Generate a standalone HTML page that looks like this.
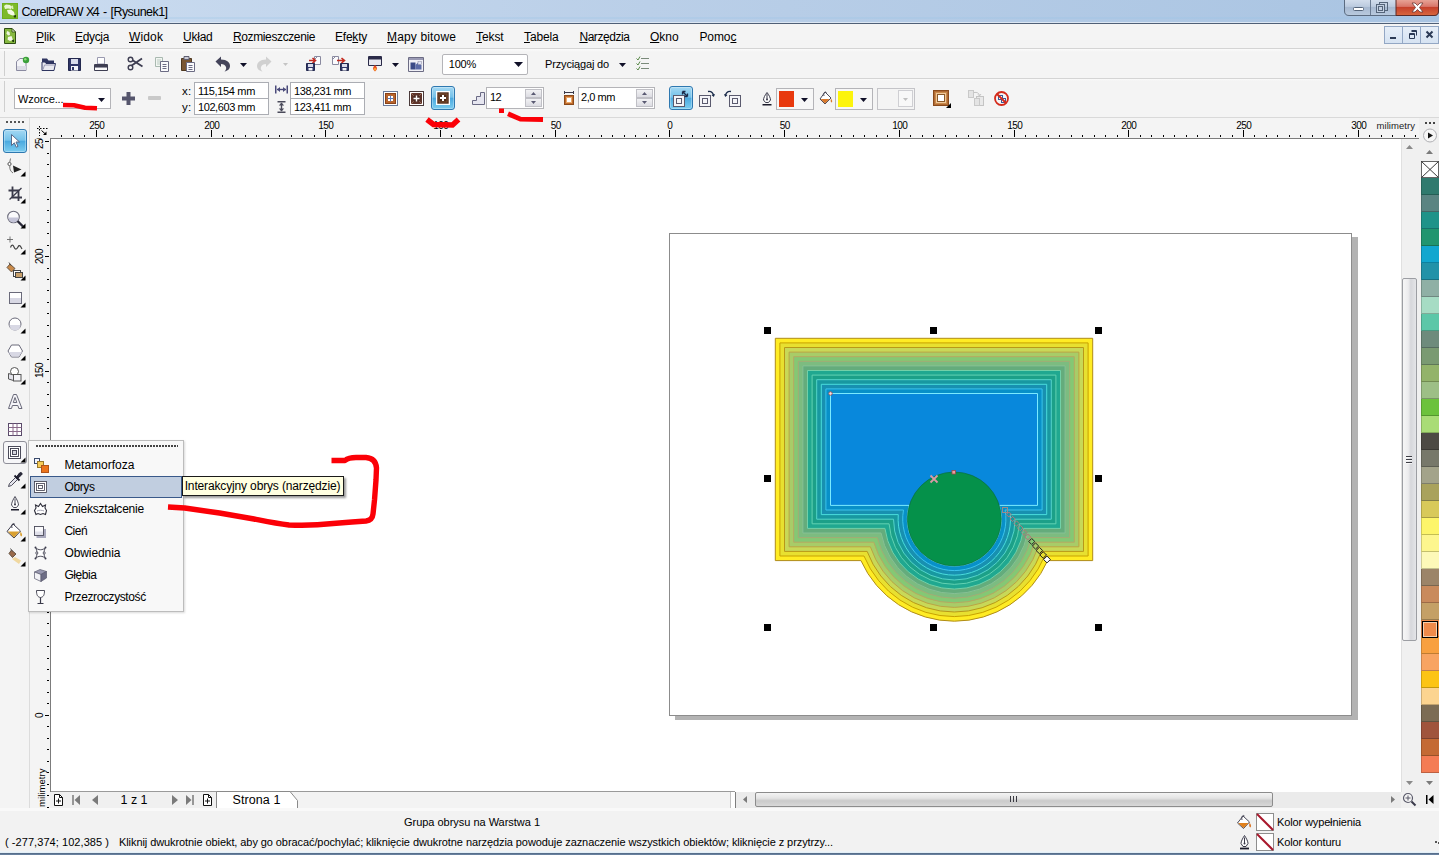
<!DOCTYPE html>
<html lang="pl"><head><meta charset="utf-8"><title>CorelDRAW X4 - [Rysunek1]</title>
<style>
*{box-sizing:border-box;margin:0;padding:0}
html,body{width:1439px;height:855px;overflow:hidden;background:#f0f0f0}
body{font-family:"Liberation Sans",sans-serif;font-size:11px;color:#000;position:relative}
div,span.t,svg{position:absolute}
.t{white-space:pre;line-height:16px;height:16px}
u{text-decoration:underline;text-underline-offset:1px}
.wbox{background:#fff;border:1px solid #abadb3}
</style></head>
<body>
<div style="left:0;top:0;width:1439px;height:23px;background:linear-gradient(90deg,#cbdcf0 0,#bacfe8 45%,#a9c4e2 100%)"></div>
<div style="left:0;top:17px;width:1439px;height:2px;background:rgba(150,195,230,.25)"></div>
<div style="left:0;top:22px;width:1439px;height:1px;background:#dbe6f3"></div>
<div style="left:0;top:23px;width:1439px;height:1px;background:#4f5f76"></div>
<svg style="left:2px;top:3px" width="16" height="16" viewBox="0 0 16 16"><rect x="0" y="0" width="16" height="16" fill="#6fae1c"/><rect x="1" y="1" width="14" height="14" fill="#7dba2a"/><path d="M2 3L4 1.5L8 2L10 4L9 6L6 5.5L3 6Z" fill="#eaf5d4"/><path d="M5 7L9 6.5L12 9L13 13L9 12L6 10.5Z" fill="#f4fae6"/><path d="M9 3L11 2.5L11.5 6L10 6Z" fill="#dcefb8"/><path d="M11.5 12.5L14 12L14 14.5L12 14.5Z" fill="#1f3d0c"/></svg>
<span class="t " style="left:21.5px;top:3.9px;font-size:12.5px;letter-spacing:-0.678px;">CorelDRAW</span>
<span class="t " style="left:86.0px;top:3.9px;font-size:12.5px;letter-spacing:-1.645px;">X4</span>
<span class="t " style="left:103.0px;top:3.9px;font-size:12.5px;">-</span>
<span class="t " style="left:110.5px;top:3.9px;font-size:12.5px;letter-spacing:-0.553px;">[Rysunek1]</span>
<svg style="left:1344px;top:0" width="95" height="17" viewBox="0 0 95 17">
<defs><linearGradient id="wb" x1="0" y1="0" x2="0" y2="1"><stop offset="0" stop-color="#d5e0ee"/><stop offset=".45" stop-color="#bccbdf"/><stop offset=".5" stop-color="#a7b9d1"/><stop offset="1" stop-color="#b9cade"/></linearGradient>
<linearGradient id="wc" x1="0" y1="0" x2="0" y2="1"><stop offset="0" stop-color="#e9a99c"/><stop offset=".45" stop-color="#d9776a"/><stop offset=".5" stop-color="#c5402b"/><stop offset="1" stop-color="#d9683f"/></linearGradient></defs>
<path d="M0.5 -1 V11 Q0.5 15.5 5 15.5 H90 Q94.5 15.5 94.5 11 V-1Z" fill="url(#wb)" stroke="#5b6b80"/>
<path d="M52 -1 V15.5 H90 Q94.5 15.5 94.5 11 V-1Z" fill="url(#wc)" stroke="#5b2b28"/>
<path d="M26.5 0V15" stroke="#6b7c93"/>
<rect x="9.5" y="7.5" width="10" height="3" rx="1" fill="#fff" stroke="#55657a"/>
<rect x="35.5" y="2.5" width="8" height="8" fill="none" stroke="#55657a"/><rect x="32.5" y="4.5" width="8" height="8" fill="#c3d0e2" stroke="#55657a"/><rect x="34.5" y="6.5" width="4" height="4" fill="none" stroke="#55657a"/>
<path d="M68 3 L71 3 L73.5 5.5 L76 3 L79 3 L75.5 7.5 L79 12 L76 12 L73.5 9.5 L71 12 L68 12 L71.5 7.5Z" fill="#fff" stroke="#6b3a36" stroke-width=".8"/>
</svg>
<div style="left:0;top:24px;width:1439px;height:24px;background:#f4f4f4"></div>
<div style="left:0;top:48px;width:1439px;height:1px;background:#d4d4d4"></div>
<svg style="left:4px;top:28px" width="13" height="17" viewBox="0 0 13 17"><path d="M.5 .5H8L11.5 4V15.5H.5Z" fill="#86b840" stroke="#2f4f14"/><path d="M8 .5V4H11.5Z" fill="#e3efcf" stroke="#2f4f14" stroke-width=".8"/><path d="M3 3L5.5 4L6 7L4 7.5L2.5 5.5Z" fill="#eef6e0"/><path d="M4 9L7.5 8L9 12L6 13L3.5 11.5Z" fill="#f4faea"/><path d="M8 12L10 11.5L10 14L8.5 14Z" fill="#1f3d0c"/></svg>
<span class="t" style="left:36px;top:28.6px;font-size:12px;letter-spacing:-0.084px"><u>P</u>lik</span>
<span class="t" style="left:75px;top:28.6px;font-size:12px;letter-spacing:-0.336px"><u>E</u>dycja</span>
<span class="t" style="left:129px;top:28.6px;font-size:12px;letter-spacing:0.132px"><u>W</u>idok</span>
<span class="t" style="left:183px;top:28.6px;font-size:12px;letter-spacing:-0.236px"><u>U</u>kład</span>
<span class="t" style="left:233px;top:28.6px;font-size:12px;letter-spacing:-0.383px"><u>R</u>ozmieszczenie</span>
<span class="t" style="left:335px;top:28.6px;font-size:12px;letter-spacing:-0.224px">Efe<u>k</u>ty</span>
<span class="t" style="left:387px;top:28.6px;font-size:12px;letter-spacing:0.149px"><u>M</u>apy bitowe</span>
<span class="t" style="left:476px;top:28.6px;font-size:12px;letter-spacing:-0.081px"><u>T</u>ekst</span>
<span class="t" style="left:524px;top:28.6px;font-size:12px;letter-spacing:-0.126px"><u>T</u>abela</span>
<span class="t" style="left:579.4px;top:28.6px;font-size:12px;letter-spacing:-0.447px"><u>N</u>arzędzia</span>
<span class="t" style="left:650px;top:28.6px;font-size:12px;letter-spacing:-0.020px"><u>O</u>kno</span>
<span class="t" style="left:699.4px;top:28.6px;font-size:12px;letter-spacing:-0.069px">Pomo<u>c</u></span>
<div style="left:1384px;top:26px;width:19px;height:18px;background:linear-gradient(#e6eef8,#d6e3f2);border:1px solid #93a7c4"></div>
<div style="left:1402px;top:26px;width:19px;height:18px;background:linear-gradient(#e6eef8,#d6e3f2);border:1px solid #93a7c4"></div>
<div style="left:1420px;top:26px;width:19px;height:18px;background:linear-gradient(#e6eef8,#d6e3f2);border:1px solid #93a7c4"></div>
<svg style="left:1385px;top:26px" width="54" height="18" viewBox="0 0 54 18"><rect x="5" y="11" width="6" height="2" fill="#2b3a55"/>
<path d="M26.5 4.5 H31.5 V9.5 M24.5 7.5 H29.5 V12.5 H24.5Z M24.5 8.5H29.5 M26.5 5.5H31.5" fill="none" stroke="#2b3a55"/>
<path d="M41.5 5.5 L47.5 11.5 M47.5 5.5 L41.5 11.5" stroke="#2b3a55" stroke-width="2"/></svg>
<div style="left:0;top:49px;width:1439px;height:29px;background:linear-gradient(#fbfbfb 0,#f4f4f4 3px)"></div>
<div style="left:0;top:78px;width:1439px;height:1px;background:#d4d4d4"></div>
<div style="left:0;top:79px;width:1439px;height:38px;background:linear-gradient(#fafafa 0,#f4f4f4 2px)"></div>
<div style="left:0;top:117px;width:1439px;height:1px;background:#d9d9d9"></div>
<div style="left:4px;top:51px;width:1px;height:25px;background:#cfcfcf"></div>
<div style="left:4px;top:81px;width:1px;height:31px;background:#cfcfcf"></div>
<svg style="left:15px;top:56px" width="16" height="16" viewBox="0 0 16 16"><path d="M1.5 5.5 L5 2.5 H11 V14.5 H1.5Z" fill="#f4f4f8" stroke="#8a8aa0"/><path d="M2 10 H11 V14 H2Z" fill="#dcdce6"/><circle cx="11" cy="4" r="3.200" fill="#3aa03a"/><circle cx="10.300" cy="3.300" r="1.200" fill="#8fdc7a"/></svg>
<svg style="left:41px;top:56px" width="16" height="16" viewBox="0 0 16 16"><path d="M1 2.5 H6 L7.5 4.5 H13 V7 H1Z" fill="#2f3560"/><path d="M1 14.5 V6 H4 L5 7.5 H14.5 L13 14.5Z" fill="#e9e9f0" stroke="#2f3560"/><path d="M2 13.5 L3.5 9 H14" fill="none" stroke="#9a9ab4"/></svg>
<svg style="left:68px;top:56px" width="14" height="16" viewBox="0 0 14 16"><path d="M.5 2.5 H12.5 V14.5 H.5Z" fill="#2f3566" stroke="#23284e"/><rect x="3" y="3" width="7" height="5" fill="#d9dbea"/><rect x="3" y="10" width="7" height="4.5" fill="#f4f4f8"/><rect x="4" y="11" width="2" height="3" fill="#2f3566"/></svg>
<svg style="left:93px;top:56px" width="16" height="16" viewBox="0 0 16 16"><path d="M4.5 1.5 H11.5 V8 H4.5Z" fill="#fff" stroke="#9a9ab0"/><path d="M1.5 8.5 H14.5 V14.5 H1.5Z" fill="#ececf2" stroke="#3e3e52"/><rect x="2" y="9" width="12" height="2.5" fill="#3e3e52"/><rect x="2" y="12" width="12" height="2" fill="#fafafa"/></svg>
<svg style="left:127px;top:56px" width="17" height="16" viewBox="0 0 17 16"><path d="M2 2 L15.5 10.5 M2.5 11 L15 2.5" stroke="#3e3e52" stroke-width="1.800" fill="none"/><circle cx="3.5" cy="3.5" r="2.300" fill="#f4f4f4" stroke="#3e3e52" stroke-width="1.400"/><circle cx="3.5" cy="11.5" r="2.300" fill="#f4f4f4" stroke="#3e3e52" stroke-width="1.400"/></svg>
<svg style="left:154px;top:56px" width="16" height="16" viewBox="0 0 16 16"><path d="M1.5 1.5 H8.5 V10.5 H1.5Z" fill="#f2f6f2" stroke="#a9b9b0"/><path d="M3 4H7M3 6H7M3 8H7" stroke="#b9c9c0"/><path d="M6.5 5.5 H14.5 V15.5 H6.5Z" fill="#fbfbfd" stroke="#6c6c84"/><path d="M8.5 8.5H12.5M8.5 10.5H12.5M8.5 12.5H12.5" stroke="#6c6c84"/></svg>
<svg style="left:180px;top:55px" width="16" height="17" viewBox="0 0 16 17"><path d="M1.5 3.5 H11.5 V15.5 H1.5Z" fill="#7a5632" stroke="#4e3820"/><path d="M4 1.5 H9 V4.5 H4Z" fill="#c9c9d4" stroke="#5e5e70"/><path d="M6.5 7.5 H14.5 V16.5 H6.5Z" fill="#fbfbfd" stroke="#6c6c84"/><path d="M8.5 10.5H12.5M8.5 12.5H12.5M8.5 14.5H12.5" stroke="#6c6c84"/></svg>
<svg style="left:215px;top:56px" width="16" height="16" viewBox="0 0 16 16"><g><path d="M0.5 5.5 L6 0.5 V3.5 C12 3.5 15 6.5 15 10 C15 13 12.5 15 9.5 15.5 C11 14 11.5 12.5 11 11 C10.300 9 8.5 8 6 8 V11Z" fill="#44445a"/></g></svg>
<svg style="left:256px;top:56px" width="16" height="16" viewBox="0 0 16 16"><g transform="translate(16,0) scale(-1,1)"><path d="M0.5 5.5 L6 0.5 V3.5 C12 3.5 15 6.5 15 10 C15 13 12.5 15 9.5 15.5 C11 14 11.5 12.5 11 11 C10.300 9 8.5 8 6 8 V11Z" fill="#d0d0d0"/></g></svg>
<svg style="left:239.5px;top:62.5px" width="7" height="4" viewBox="0 0 7 4"><path d="M0 0 H7 L3.5 4Z" fill="#101028"/></svg>
<svg style="left:282.5px;top:63.0px" width="5" height="3" viewBox="0 0 5 3"><path d="M0 0 H5 L2.5 3Z" fill="#c4c4c4"/></svg>
<svg style="left:306px;top:55px" width="17" height="17" viewBox="0 0 17 17"><path d="M8.5 1.5 H14.5 V9.5 H8.5Z" fill="#fbfbfd" stroke="#8a8aa0"/><path d="M8.5 4.5 L11.5 1.5" stroke="#8a8aa0"/><path d="M3 5.5 H9 M6.5 3 L9.5 5.5 L6.5 8" stroke="#c42a1e" stroke-width="1.600" fill="none"/><path d="M.5 8.5 H8.5 V15.5 H.5Z" fill="#2f3566" stroke="#23284e"/><rect x="2" y="9" width="5" height="3" fill="#d9dbea"/><rect x="2.5" y="13" width="4" height="2.5" fill="#f4f4f8"/></svg>
<svg style="left:332px;top:55px" width="17" height="17" viewBox="0 0 17 17"><path d="M.5 1.5 H6.5 V9.5 H.5Z" fill="#fbfbfd" stroke="#8a8aa0"/><path d="M.5 4.5 L3.5 1.5" stroke="#8a8aa0"/><path d="M5 5.5 H12 M9.5 3 L12.5 5.5 L9.5 8" stroke="#c42a1e" stroke-width="1.600" fill="none"/><path d="M8.5 8.5 H16.5 V15.5 H8.5Z" fill="#2f3566" stroke="#23284e"/><rect x="10" y="9" width="5" height="3" fill="#d9dbea"/><rect x="10.5" y="13" width="4" height="2.5" fill="#f4f4f8"/></svg>
<svg style="left:368px;top:56px" width="14" height="16" viewBox="0 0 14 16"><path d="M.5 .5 H13.5 V9.5 H.5Z" fill="#e6e6ee" stroke="#2a2a48"/><rect x="1" y="1" width="12" height="2.5" fill="#2a2a48"/><path d="M7 9 C9 11 10 13 7 15.5 C4 13 5 11 7 9Z" fill="#e8481c"/><path d="M7 11.5 C8 12.5 8.300 13.5 7 15 C5.700 13.5 6 12.5 7 11.5Z" fill="#ffc83a"/></svg>
<svg style="left:391.5px;top:62.5px" width="7" height="4" viewBox="0 0 7 4"><path d="M0 0 H7 L3.5 4Z" fill="#101028"/></svg>
<svg style="left:408px;top:57px" width="16" height="15" viewBox="0 0 16 15"><path d="M.5 .5 H15.5 V14.5 H.5Z" fill="#f0f0f6" stroke="#6c6c84"/><rect x="1" y="1" width="14" height="2" fill="#9a9ab4"/><path d="M2.5 5.5 H7.5 V12.5 H2.5Z" fill="#3a4a86"/><path d="M7.5 8 L10 5.5 L13.5 8 V12.5 H7.5Z" fill="#5a6aa6"/><rect x="10" y="4.5" width="3.5" height="3" fill="#dfe3f4" stroke="#8a8aa0" stroke-width=".5"/></svg>
<div class="wbox" style="left:442px;top:54px;width:86px;height:21px;border-color:#b4b4b8;border-radius:2px"></div>
<span class="t " style="left:448.7px;top:56.4px;font-size:11px;letter-spacing:-0.158px;">100%</span>
<svg style="left:513.5px;top:62.0px" width="9" height="5" viewBox="0 0 9 5"><path d="M0 0 H9 L4.5 5Z" fill="#101028"/></svg>
<span class="t " style="left:545.0px;top:56.4px;font-size:11px;letter-spacing:-0.156px;">Przyciągaj do</span>
<svg style="left:618.5px;top:62.5px" width="7" height="4" viewBox="0 0 7 4"><path d="M0 0 H7 L3.5 4Z" fill="#101028"/></svg>
<svg style="left:636px;top:56px" width="14" height="15" viewBox="0 0 14 15"><path d="M5 2.5H13M5 7.5H13M5 12.5H13" stroke="#7a8a7a" stroke-width="1.200"/><path d="M.5 2.5 L2 4 L4 .5 M.5 7.5 L2 9 L4 5.5 M.5 12.5 L2 14 L4 10.5" stroke="#5a8a4a" fill="none"/></svg>
<div class="wbox" style="left:14px;top:88px;width:97px;height:21px;border-color:#b4b4b8"></div>
<span class="t " style="left:18.0px;top:91.4px;font-size:11px;letter-spacing:-0.105px;">Wzorce...</span>
<svg style="left:97.5px;top:97.5px" width="7" height="4" viewBox="0 0 7 4"><path d="M0 0 H7 L3.5 4Z" fill="#101028"/></svg>
<svg style="left:122px;top:92px" width="13" height="13" viewBox="0 0 13 13"><path d="M4.5 0 H8.5 V4.5 H13 V8.5 H8.5 V13 H4.5 V8.5 H0 V4.5 H4.5Z" fill="#55556c"/></svg>
<div style="left:148px;top:96px;width:13px;height:4px;background:#c9c9c9;border-radius:1px"></div>
<span class="t " style="left:182.0px;top:83.2px;font-size:11.5px;letter-spacing:0.278px;">x:</span>
<span class="t " style="left:182.0px;top:99.2px;font-size:11.5px;letter-spacing:0.278px;">y:</span>
<div class="wbox" style="left:194px;top:82px;width:75px;height:17px"></div>
<div class="wbox" style="left:194px;top:98px;width:75px;height:17px"></div>
<span class="t " style="left:198.0px;top:83.4px;font-size:11px;letter-spacing:-0.332px;">115,154 mm</span>
<span class="t " style="left:198.0px;top:99.4px;font-size:11px;letter-spacing:-0.414px;">102,603 mm</span>
<svg style="left:275px;top:85px" width="13" height="9" viewBox="0 0 13 9"><path d="M.75 .5V8.5M12.250 .5V8.5" stroke="#4a4a7a" stroke-width="1.5"/><path d="M2 4.5H11" stroke="#4a4a7a" stroke-width="1.400"/><path d="M2 4.5L5 2V7ZM11 4.5L8 2V7Z" fill="#4a4a7a"/></svg>
<svg style="left:277px;top:101px" width="9" height="12" viewBox="0 0 9 12"><path d="M.5 .75H8.5M.5 11.250H8.5" stroke="#4a4a5a" stroke-width="1.5"/><path d="M4.5 2V10" stroke="#4a4a5a" stroke-width="1.400"/><path d="M4.5 1.5L1.800 4.5H7.200ZM4.5 10.5L1.800 7.5H7.200Z" fill="#4a4a5a"/></svg>
<div class="wbox" style="left:290px;top:82px;width:75px;height:17px"></div>
<div class="wbox" style="left:290px;top:98px;width:75px;height:17px"></div>
<span class="t " style="left:294.0px;top:83.4px;font-size:11px;letter-spacing:-0.414px;">138,231 mm</span>
<span class="t " style="left:294.0px;top:99.4px;font-size:11px;letter-spacing:-0.332px;">123,411 mm</span>
<svg style="left:383px;top:91px" width="15" height="15" viewBox="0 0 15 15"><rect x=".5" y=".5" width="14" height="14" fill="#fff" stroke="#6a7a9a"/><rect x="2.5" y="2.5" width="10" height="10" fill="#b8642c" stroke="#8a4218"/><rect x="5" y="5" width="5" height="5" fill="#fff"/><path d="M7.5 4.5V10.5M4.5 7.5H10.5" stroke="#5a78b8"/></svg>
<svg style="left:409px;top:91px" width="15" height="15" viewBox="0 0 15 15"><rect x=".5" y=".5" width="14" height="14" fill="#fff" stroke="#4a3a3a"/><rect x="2" y="2" width="11" height="11" fill="#5e342a"/><path d="M2 2L13 13M13 2L2 13" stroke="#a9826a" stroke-width=".8"/><rect x="4.5" y="4.5" width="6" height="6" fill="#4a2a22"/><path d="M7.5 4.5V10.5M4.5 7.5H10.5" stroke="#fff" stroke-width="1.400"/></svg>
<div style="left:431px;top:86px;width:24px;height:24px;background:linear-gradient(#a4d8f3 0,#74c2ea 46%,#4caae0 52%,#7ccdf0 100%);border:1px solid #2e78b0;border-radius:3px;box-shadow:inset 0 0 0 1px rgba(255,255,255,.3)"></div>
<svg style="left:436px;top:91px" width="15" height="15" viewBox="0 0 15 15"><rect x="0" y="0" width="14" height="14" fill="#fff"/><rect x="1.300" y="1.300" width="11.400" height="11.400" fill="#4e2a1a"/><rect x="3" y="3" width="8" height="8" fill="none" stroke="#8a5a3a" stroke-width=".8"/><path d="M7 4V10M4 7H10" stroke="#fff" stroke-width="2"/></svg>
<svg style="left:472px;top:92px" width="13" height="13" viewBox="0 0 13 13"><path d="M.5 12.5 V8.5 H4.5 V4.5 H8.5 V.5 H12.5 V12.5Z" fill="#e6e6f0" stroke="#6a6a84"/></svg>
<div class="wbox" style="left:486px;top:87px;width:58px;height:22px;border-color:#b4b4b8"></div>
<span class="t " style="left:490.0px;top:89.1px;font-size:11px;letter-spacing:-0.617px;">12</span>
<div style="left:525px;top:89px;width:17px;height:9px;background:linear-gradient(#f2f2f4,#dcdce2);border:1px solid #c0c0c6"></div>
<svg style="left:531px;top:92px" width="5" height="3" viewBox="0 0 5 3"><path d="M0 3L2.5 0L5 3Z" fill="#5a5a72"/></svg>
<div style="left:525px;top:98px;width:17px;height:9px;background:linear-gradient(#f2f2f4,#dcdce2);border:1px solid #c0c0c6"></div>
<svg style="left:531px;top:101px" width="5" height="3" viewBox="0 0 5 3"><path d="M0 0H5L2.5 3Z" fill="#5a5a72"/></svg>
<svg style="left:564px;top:91px" width="10" height="14" viewBox="0 0 10 14"><path d="M.5 0V3M9.5 0V3M.5 1.5H9.5" stroke="#3a3a4a"/><rect x=".5" y="4.5" width="9" height="9" fill="#c06a2a" stroke="#8a4a1a"/><rect x="2.5" y="6.5" width="5" height="5" fill="#fff" stroke="#e9a96a"/></svg>
<div class="wbox" style="left:578px;top:87px;width:77px;height:22px;border-color:#b4b4b8"></div>
<span class="t " style="left:581.0px;top:89.1px;font-size:11px;letter-spacing:-0.445px;">2,0 mm</span>
<div style="left:636px;top:89px;width:17px;height:9px;background:linear-gradient(#f2f2f4,#dcdce2);border:1px solid #c0c0c6"></div>
<svg style="left:642px;top:92px" width="5" height="3" viewBox="0 0 5 3"><path d="M0 3L2.5 0L5 3Z" fill="#5a5a72"/></svg>
<div style="left:636px;top:98px;width:17px;height:9px;background:linear-gradient(#f2f2f4,#dcdce2);border:1px solid #c0c0c6"></div>
<svg style="left:642px;top:101px" width="5" height="3" viewBox="0 0 5 3"><path d="M0 0H5L2.5 3Z" fill="#5a5a72"/></svg>
<div style="left:669px;top:86px;width:24px;height:24px;background:linear-gradient(#a4d8f3 0,#74c2ea 46%,#4caae0 52%,#7ccdf0 100%);border:1px solid #2e78b0;border-radius:3px;box-shadow:inset 0 0 0 1px rgba(255,255,255,.3)"></div>
<svg style="left:672px;top:89px" width="20" height="19" viewBox="0 0 20 19"><rect x="1.5" y="6.5" width="11" height="11" fill="#f4f4f8" stroke="#5a5a6e"/><rect x="4.5" y="9.5" width="5" height="5" fill="none" stroke="#5a5a6e"/><path d="M10.5 2.5 L15.5 7.5 M10.5 2.5 V5.5 M10.5 2.5 H13.5 M15.5 7.5 V4.5 M15.5 7.5 H12.5" stroke="#1a2a4a" stroke-width="1.300" fill="none"/></svg>
<svg style="left:698px;top:89px" width="20" height="19" viewBox="0 0 20 19"><rect x="1.5" y="6.5" width="11" height="11" fill="#f4f4f8" stroke="#5a5a6e"/><rect x="4.5" y="9.5" width="5" height="5" fill="none" stroke="#5a5a6e"/><path d="M10 2.5 C13 2 15 4 15.5 6.5" stroke="#1a2a4a" stroke-width="1.300" fill="none"/><path d="M13.5 6 L15.800 8 L17 5Z" fill="#1a2a4a"/></svg>
<svg style="left:723px;top:89px" width="20" height="19" viewBox="0 0 20 19"><rect x="6.5" y="6.5" width="11" height="11" fill="#f4f4f8" stroke="#5a5a6e"/><rect x="9.5" y="9.5" width="5" height="5" fill="none" stroke="#5a5a6e"/><path d="M8 2.5 C5 2 3 4 2.5 6.5" stroke="#1a2a4a" stroke-width="1.300" fill="none"/><path d="M4.5 6 L2.200 8 L1 5Z" fill="#1a2a4a"/></svg>
<svg style="left:762px;top:92px" width="10" height="14" viewBox="0 0 10 14"><path d="M5 .5 C3 3 1.5 6 1.5 8 L3.5 10.5 H6.5 L8.5 8 C8.5 6 7 3 5 .5Z" fill="#fff" stroke="#3a3a4a"/><path d="M5 2V7" stroke="#3a3a4a"/><circle cx="5" cy="7.5" r="1" fill="#3a3a4a"/><path d="M.5 12.750H9.5" stroke="#1a1a2a" stroke-width="1.5"/></svg>
<div style="left:776px;top:88px;width:38px;height:22px;background:#f7f7f7;border:1px solid #b4b4b8"></div>
<div style="left:779px;top:91px;width:15px;height:16px;background:#e8390e"></div>
<svg style="left:800.5px;top:97.5px" width="7" height="4" viewBox="0 0 7 4"><path d="M0 0 H7 L3.5 4Z" fill="#101028"/></svg>
<svg style="left:819px;top:91px" width="14" height="15" viewBox="0 0 14 15"><path d="M6 1 L12 7 L6 13 L1 8Z" fill="#fff" stroke="#4a4a5a"/><path d="M1.5 8 L6 12.5 L10.5 8Z" fill="#d9782a"/><path d="M5 5 C4 2 6 0 7.5 1.5" fill="none" stroke="#4a4a5a"/><path d="M12 7.5 C13.5 9.5 13.5 11 12.5 11.5 C11.5 11 11.5 9.5 12 7.5Z" fill="#d9782a"/></svg>
<div style="left:835px;top:88px;width:38px;height:22px;background:#f7f7f7;border:1px solid #b4b4b8"></div>
<div style="left:838px;top:91px;width:15px;height:16px;background:#fcf40c"></div>
<svg style="left:859.5px;top:97.5px" width="7" height="4" viewBox="0 0 7 4"><path d="M0 0 H7 L3.5 4Z" fill="#101028"/></svg>
<div style="left:877px;top:88px;width:38px;height:22px;background:#f4f4f4;border:1px solid #c4c4c8"></div>
<div style="left:898px;top:90px;width:15px;height:17px;background:#f8f8f8;border:1px solid #cfcfd3"></div>
<svg style="left:903.0px;top:98.0px" width="5" height="3" viewBox="0 0 5 3"><path d="M0 0 H5 L2.5 3Z" fill="#c0c0c0"/></svg>
<svg style="left:933px;top:90px" width="19" height="19" viewBox="0 0 19 19"><rect x=".5" y=".5" width="15" height="15" fill="#b06a34" stroke="#8a4a1a"/><rect x="2.5" y="2.5" width="11" height="11" fill="#f0c89a" stroke="#c98a4a"/><rect x="4.5" y="4.5" width="7" height="7" fill="#fff" stroke="#8a5a2a"/><path d="M18 13V18H13Z" fill="#000"/></svg>
<svg style="left:968px;top:90px" width="17" height="16" viewBox="0 0 17 16"><rect x=".5" y=".5" width="5" height="7" fill="#e4e4e4" stroke="#c9c9c9"/><rect x="8.5" y="6.5" width="7" height="9" fill="#e9e9e9" stroke="#c4c4c4"/><rect x="6.5" y="8.5" width="5" height="7" fill="#e4e4e4" stroke="#c9c9c9"/><path d="M6 2.5 C9 2 11 3 11.5 5.5 M10 4.5L11.5 6L13 4" fill="none" stroke="#c4c4c4"/></svg>
<svg style="left:994px;top:91px" width="16" height="16" viewBox="0 0 16 16"><rect x="4.5" y="4.5" width="4" height="4" fill="#fff" stroke="#3a5a9a"/><rect x="7.5" y="7.5" width="4" height="4" fill="#fff" stroke="#3a5a9a"/><circle cx="7.5" cy="7.5" r="6.5" fill="none" stroke="#d42a1a" stroke-width="1.800"/><path d="M3 3L12 12" stroke="#d42a1a" stroke-width="2"/></svg>
<div style="left:51px;top:139px;width:1350px;height:653px;background:#fff"></div>
<div style="left:675px;top:237px;width:683px;height:483px;background:#b3b3b3"></div>
<div style="left:669px;top:233px;width:683px;height:483px;background:#fff;border:1px solid #8c8c8c"></div>
<div style="left:30px;top:118px;width:1390px;height:21px;background:#f4f4f4"></div>
<div style="left:50px;top:138px;width:1369px;height:1px;background:#7c7c7c"></div>
<svg style="left:0px;top:118px" width="1439" height="20" viewBox="0 0 1439 20"><rect x="61" y="17" width="1" height="2" fill="#000"/><rect x="73" y="17" width="1" height="2" fill="#000"/><rect x="84" y="17" width="1" height="2" fill="#000"/><rect x="96" y="12" width="1" height="7" fill="#000"/><rect x="107" y="17" width="1" height="2" fill="#000"/><rect x="119" y="17" width="1" height="2" fill="#000"/><rect x="130" y="17" width="1" height="2" fill="#000"/><rect x="142" y="17" width="1" height="2" fill="#000"/><rect x="153" y="17" width="1" height="2" fill="#000"/><rect x="165" y="17" width="1" height="2" fill="#000"/><rect x="176" y="17" width="1" height="2" fill="#000"/><rect x="188" y="17" width="1" height="2" fill="#000"/><rect x="199" y="17" width="1" height="2" fill="#000"/><rect x="211" y="12" width="1" height="7" fill="#000"/><rect x="222" y="17" width="1" height="2" fill="#000"/><rect x="233" y="17" width="1" height="2" fill="#000"/><rect x="245" y="17" width="1" height="2" fill="#000"/><rect x="256" y="17" width="1" height="2" fill="#000"/><rect x="268" y="17" width="1" height="2" fill="#000"/><rect x="279" y="17" width="1" height="2" fill="#000"/><rect x="291" y="17" width="1" height="2" fill="#000"/><rect x="302" y="17" width="1" height="2" fill="#000"/><rect x="314" y="17" width="1" height="2" fill="#000"/><rect x="325" y="12" width="1" height="7" fill="#000"/><rect x="337" y="17" width="1" height="2" fill="#000"/><rect x="348" y="17" width="1" height="2" fill="#000"/><rect x="360" y="17" width="1" height="2" fill="#000"/><rect x="371" y="17" width="1" height="2" fill="#000"/><rect x="383" y="17" width="1" height="2" fill="#000"/><rect x="394" y="17" width="1" height="2" fill="#000"/><rect x="406" y="17" width="1" height="2" fill="#000"/><rect x="417" y="17" width="1" height="2" fill="#000"/><rect x="428" y="17" width="1" height="2" fill="#000"/><rect x="440" y="12" width="1" height="7" fill="#000"/><rect x="451" y="17" width="1" height="2" fill="#000"/><rect x="463" y="17" width="1" height="2" fill="#000"/><rect x="474" y="17" width="1" height="2" fill="#000"/><rect x="486" y="17" width="1" height="2" fill="#000"/><rect x="497" y="17" width="1" height="2" fill="#000"/><rect x="509" y="17" width="1" height="2" fill="#000"/><rect x="520" y="17" width="1" height="2" fill="#000"/><rect x="532" y="17" width="1" height="2" fill="#000"/><rect x="543" y="17" width="1" height="2" fill="#000"/><rect x="555" y="12" width="1" height="7" fill="#000"/><rect x="566" y="17" width="1" height="2" fill="#000"/><rect x="578" y="17" width="1" height="2" fill="#000"/><rect x="589" y="17" width="1" height="2" fill="#000"/><rect x="601" y="17" width="1" height="2" fill="#000"/><rect x="612" y="17" width="1" height="2" fill="#000"/><rect x="624" y="17" width="1" height="2" fill="#000"/><rect x="635" y="17" width="1" height="2" fill="#000"/><rect x="646" y="17" width="1" height="2" fill="#000"/><rect x="658" y="17" width="1" height="2" fill="#000"/><rect x="669" y="12" width="1" height="7" fill="#000"/><rect x="681" y="17" width="1" height="2" fill="#000"/><rect x="692" y="17" width="1" height="2" fill="#000"/><rect x="704" y="17" width="1" height="2" fill="#000"/><rect x="715" y="17" width="1" height="2" fill="#000"/><rect x="727" y="17" width="1" height="2" fill="#000"/><rect x="738" y="17" width="1" height="2" fill="#000"/><rect x="750" y="17" width="1" height="2" fill="#000"/><rect x="761" y="17" width="1" height="2" fill="#000"/><rect x="773" y="17" width="1" height="2" fill="#000"/><rect x="784" y="12" width="1" height="7" fill="#000"/><rect x="796" y="17" width="1" height="2" fill="#000"/><rect x="807" y="17" width="1" height="2" fill="#000"/><rect x="819" y="17" width="1" height="2" fill="#000"/><rect x="830" y="17" width="1" height="2" fill="#000"/><rect x="841" y="17" width="1" height="2" fill="#000"/><rect x="853" y="17" width="1" height="2" fill="#000"/><rect x="864" y="17" width="1" height="2" fill="#000"/><rect x="876" y="17" width="1" height="2" fill="#000"/><rect x="887" y="17" width="1" height="2" fill="#000"/><rect x="899" y="12" width="1" height="7" fill="#000"/><rect x="910" y="17" width="1" height="2" fill="#000"/><rect x="922" y="17" width="1" height="2" fill="#000"/><rect x="933" y="17" width="1" height="2" fill="#000"/><rect x="945" y="17" width="1" height="2" fill="#000"/><rect x="956" y="17" width="1" height="2" fill="#000"/><rect x="968" y="17" width="1" height="2" fill="#000"/><rect x="979" y="17" width="1" height="2" fill="#000"/><rect x="991" y="17" width="1" height="2" fill="#000"/><rect x="1002" y="17" width="1" height="2" fill="#000"/><rect x="1014" y="12" width="1" height="7" fill="#000"/><rect x="1025" y="17" width="1" height="2" fill="#000"/><rect x="1036" y="17" width="1" height="2" fill="#000"/><rect x="1048" y="17" width="1" height="2" fill="#000"/><rect x="1059" y="17" width="1" height="2" fill="#000"/><rect x="1071" y="17" width="1" height="2" fill="#000"/><rect x="1082" y="17" width="1" height="2" fill="#000"/><rect x="1094" y="17" width="1" height="2" fill="#000"/><rect x="1105" y="17" width="1" height="2" fill="#000"/><rect x="1117" y="17" width="1" height="2" fill="#000"/><rect x="1128" y="12" width="1" height="7" fill="#000"/><rect x="1140" y="17" width="1" height="2" fill="#000"/><rect x="1151" y="17" width="1" height="2" fill="#000"/><rect x="1163" y="17" width="1" height="2" fill="#000"/><rect x="1174" y="17" width="1" height="2" fill="#000"/><rect x="1186" y="17" width="1" height="2" fill="#000"/><rect x="1197" y="17" width="1" height="2" fill="#000"/><rect x="1209" y="17" width="1" height="2" fill="#000"/><rect x="1220" y="17" width="1" height="2" fill="#000"/><rect x="1232" y="17" width="1" height="2" fill="#000"/><rect x="1243" y="12" width="1" height="7" fill="#000"/><rect x="1254" y="17" width="1" height="2" fill="#000"/><rect x="1266" y="17" width="1" height="2" fill="#000"/><rect x="1277" y="17" width="1" height="2" fill="#000"/><rect x="1289" y="17" width="1" height="2" fill="#000"/><rect x="1300" y="17" width="1" height="2" fill="#000"/><rect x="1312" y="17" width="1" height="2" fill="#000"/><rect x="1323" y="17" width="1" height="2" fill="#000"/><rect x="1335" y="17" width="1" height="2" fill="#000"/><rect x="1346" y="17" width="1" height="2" fill="#000"/><rect x="1358" y="12" width="1" height="7" fill="#000"/><rect x="1369" y="17" width="1" height="2" fill="#000"/><rect x="1381" y="17" width="1" height="2" fill="#000"/><rect x="1392" y="17" width="1" height="2" fill="#000"/><rect x="1404" y="17" width="1" height="2" fill="#000"/><rect x="1415" y="17" width="1" height="2" fill="#000"/></svg>
<span class="t " style="left:89.3px;top:117.7px;font-size:10px;letter-spacing:-0.561px;">250</span>
<span class="t " style="left:204.3px;top:117.7px;font-size:10px;letter-spacing:-0.561px;">200</span>
<span class="t " style="left:318.3px;top:117.7px;font-size:10px;letter-spacing:-0.561px;">150</span>
<span class="t " style="left:433.3px;top:117.7px;font-size:10px;letter-spacing:-0.561px;">100</span>
<span class="t " style="left:550.8px;top:117.7px;font-size:10px;letter-spacing:-0.561px;">50</span>
<span class="t " style="left:667.2px;top:117.7px;font-size:10px;">0</span>
<span class="t " style="left:779.8px;top:117.7px;font-size:10px;letter-spacing:-0.561px;">50</span>
<span class="t " style="left:892.3px;top:117.7px;font-size:10px;letter-spacing:-0.561px;">100</span>
<span class="t " style="left:1007.3px;top:117.7px;font-size:10px;letter-spacing:-0.561px;">150</span>
<span class="t " style="left:1121.3px;top:117.7px;font-size:10px;letter-spacing:-0.561px;">200</span>
<span class="t " style="left:1236.3px;top:117.7px;font-size:10px;letter-spacing:-0.561px;">250</span>
<span class="t " style="left:1351.3px;top:117.7px;font-size:10px;letter-spacing:-0.561px;">300</span>
<span class="t " style="left:1376.5px;top:117.9px;font-size:9.5px;letter-spacing:0.056px;color:#222;">milimetry</span>
<div style="left:30px;top:139px;width:20px;height:669px;background:#f4f4f4"></div>
<div style="left:29px;top:118px;width:1px;height:690px;background:#dcdcdc"></div>
<div style="left:50px;top:138px;width:1px;height:654px;background:#7c7c7c"></div>
<svg style="left:31px;top:0px" width="20" height="855" viewBox="0 0 20 855"><rect x="16" y="807" width="2" height="1" fill="#000"/><rect x="16" y="795" width="2" height="1" fill="#000"/><rect x="16" y="784" width="2" height="1" fill="#000"/><rect x="16" y="772" width="2" height="1" fill="#000"/><rect x="16" y="761" width="2" height="1" fill="#000"/><rect x="16" y="749" width="2" height="1" fill="#000"/><rect x="16" y="738" width="2" height="1" fill="#000"/><rect x="16" y="726" width="2" height="1" fill="#000"/><rect x="14" y="715" width="4" height="1" fill="#000"/><rect x="16" y="703" width="2" height="1" fill="#000"/><rect x="16" y="692" width="2" height="1" fill="#000"/><rect x="16" y="680" width="2" height="1" fill="#000"/><rect x="16" y="669" width="2" height="1" fill="#000"/><rect x="16" y="658" width="2" height="1" fill="#000"/><rect x="16" y="646" width="2" height="1" fill="#000"/><rect x="16" y="635" width="2" height="1" fill="#000"/><rect x="16" y="623" width="2" height="1" fill="#000"/><rect x="16" y="612" width="2" height="1" fill="#000"/><rect x="14" y="600" width="4" height="1" fill="#000"/><rect x="16" y="589" width="2" height="1" fill="#000"/><rect x="16" y="577" width="2" height="1" fill="#000"/><rect x="16" y="566" width="2" height="1" fill="#000"/><rect x="16" y="554" width="2" height="1" fill="#000"/><rect x="16" y="543" width="2" height="1" fill="#000"/><rect x="16" y="531" width="2" height="1" fill="#000"/><rect x="16" y="520" width="2" height="1" fill="#000"/><rect x="16" y="508" width="2" height="1" fill="#000"/><rect x="16" y="497" width="2" height="1" fill="#000"/><rect x="14" y="485" width="4" height="1" fill="#000"/><rect x="16" y="474" width="2" height="1" fill="#000"/><rect x="16" y="463" width="2" height="1" fill="#000"/><rect x="16" y="451" width="2" height="1" fill="#000"/><rect x="16" y="440" width="2" height="1" fill="#000"/><rect x="16" y="428" width="2" height="1" fill="#000"/><rect x="16" y="417" width="2" height="1" fill="#000"/><rect x="16" y="405" width="2" height="1" fill="#000"/><rect x="16" y="394" width="2" height="1" fill="#000"/><rect x="16" y="382" width="2" height="1" fill="#000"/><rect x="14" y="371" width="4" height="1" fill="#000"/><rect x="16" y="359" width="2" height="1" fill="#000"/><rect x="16" y="348" width="2" height="1" fill="#000"/><rect x="16" y="336" width="2" height="1" fill="#000"/><rect x="16" y="325" width="2" height="1" fill="#000"/><rect x="16" y="313" width="2" height="1" fill="#000"/><rect x="16" y="302" width="2" height="1" fill="#000"/><rect x="16" y="290" width="2" height="1" fill="#000"/><rect x="16" y="279" width="2" height="1" fill="#000"/><rect x="16" y="268" width="2" height="1" fill="#000"/><rect x="14" y="256" width="4" height="1" fill="#000"/><rect x="16" y="245" width="2" height="1" fill="#000"/><rect x="16" y="233" width="2" height="1" fill="#000"/><rect x="16" y="222" width="2" height="1" fill="#000"/><rect x="16" y="210" width="2" height="1" fill="#000"/><rect x="16" y="199" width="2" height="1" fill="#000"/><rect x="16" y="187" width="2" height="1" fill="#000"/><rect x="16" y="176" width="2" height="1" fill="#000"/><rect x="16" y="164" width="2" height="1" fill="#000"/><rect x="16" y="153" width="2" height="1" fill="#000"/><rect x="14" y="141" width="4" height="1" fill="#000"/></svg>
<div style="left:30px;top:138px;width:20px;height:670px;overflow:hidden">
<span class="t" style="left:14.3px;top:579.7px;font-size:10px;line-height:1;height:auto;transform-origin:0 0;transform:rotate(-90deg) translateY(-9.05px)">0</span>
<span class="t" style="left:14.3px;top:355.0px;font-size:10px;letter-spacing:-0.561px;line-height:1;height:auto;transform-origin:0 0;transform:rotate(-90deg) translateY(-9.05px)">100</span>
<span class="t" style="left:14.3px;top:240.3px;font-size:10px;letter-spacing:-0.561px;line-height:1;height:auto;transform-origin:0 0;transform:rotate(-90deg) translateY(-9.05px)">150</span>
<span class="t" style="left:14.3px;top:125.5px;font-size:10px;letter-spacing:-0.561px;line-height:1;height:auto;transform-origin:0 0;transform:rotate(-90deg) translateY(-9.05px)">200</span>
<span class="t" style="left:14.3px;top:10.8px;font-size:10px;letter-spacing:-0.561px;line-height:1;height:auto;transform-origin:0 0;transform:rotate(-90deg) translateY(-9.05px)">250</span>
<span class="t" style="left:16.3px;top:669.2px;font-size:9.5px;letter-spacing:0.056px;line-height:1;height:auto;transform-origin:0 0;transform:rotate(-90deg) translateY(-8.60px)">milimetry</span>
</div>
<svg style="left:36px;top:125px" width="13" height="12" viewBox="0 0 13 12"><path d="M3.5 1V11M1 3.5H12" stroke="#000" stroke-dasharray="1.5 1.5"/><path d="M5.5 5.5L10 9.5" stroke="#000" fill="none"/><path d="M10.5 10V6.5L7 10Z" fill="#000"/></svg>
<svg style="left:0px;top:0px" width="1439" height="855" viewBox="0 0 1439 855"><path d="M775.30 338.30H1092.70V560.60H1047.65A102.20 102.20 0 0 1 860.95 560.60H775.30Z" fill="#ffec24" stroke="#b08c18" stroke-width="1"/><path d="M779.90 342.90H1088.10V556.00H1044.61A97.60 97.60 0 0 1 863.99 556.00H779.90Z" fill="#e8e030" stroke="#c8a200" stroke-width="1"/><path d="M784.50 347.50H1083.50V551.40H1041.47A93.00 93.00 0 0 1 867.13 551.40H784.50Z" fill="#c8d858" stroke="#b89818" stroke-width="1"/><path d="M789.10 352.10H1078.90V546.80H1038.21A88.40 88.40 0 0 1 870.39 546.80H789.10Z" fill="#a8cc68" stroke="#bca444" stroke-width="1"/><path d="M793.70 356.70H1074.30V542.20H1034.82A83.80 83.80 0 0 1 873.78 542.20H793.70Z" fill="#84c874" stroke="#b8a860" stroke-width="1"/><path d="M798.30 361.30H1069.70V537.60H1031.28A79.20 79.20 0 0 1 877.32 537.60H798.30Z" fill="#7cbc80" stroke="#a4ac74" stroke-width="1"/><path d="M802.90 365.90H1065.10V533.00H1027.57A74.60 74.60 0 0 1 881.03 533.00H802.90Z" fill="#64ac7c" stroke="#86c094" stroke-width="1"/><path d="M807.50 370.50H1060.50V528.40H1023.67A70.00 70.00 0 0 1 884.93 528.40H807.50Z" fill="#20a890" stroke="#72d0a8" stroke-width="1"/><path d="M812.10 375.10H1055.90V523.80H1019.52A65.40 65.40 0 0 1 889.08 523.80H812.10Z" fill="#1ca088" stroke="#62d2b2" stroke-width="1"/><path d="M816.70 379.70H1051.30V519.20H1015.10A60.80 60.80 0 0 1 893.50 519.20H816.70Z" fill="#1898a0" stroke="#54d4c8" stroke-width="1"/><path d="M821.30 384.30H1046.70V514.60H1010.33A56.20 56.20 0 1 1 898.27 514.60H821.30Z" fill="#1890b0" stroke="#4adcdc" stroke-width="1"/><path d="M825.90 388.90H1042.10V510.00H1005.11A51.60 51.60 0 1 1 903.49 510.00H825.90Z" fill="#0890c8" stroke="#3cc4ec" stroke-width="1"/><path d="M830.50 393.50H1037.50V505.40H999.29A47.00 47.00 0 1 1 909.31 505.40H830.50Z" fill="#0888dc" stroke="#7aeaff" stroke-width="1"/><circle cx="954.3" cy="519.0" r="47.0" fill="#05914a" stroke="#0a6a3a" stroke-width=".6"/><rect x="764.0" y="327.0" width="7" height="7" fill="#000"/><rect x="764.0" y="475.0" width="7" height="7" fill="#000"/><rect x="764.0" y="624.0" width="7" height="7" fill="#000"/><rect x="930.0" y="327.0" width="7" height="7" fill="#000"/><rect x="930.0" y="624.0" width="7" height="7" fill="#000"/><rect x="1095.0" y="327.0" width="7" height="7" fill="#000"/><rect x="1095.0" y="475.0" width="7" height="7" fill="#000"/><rect x="1095.0" y="624.0" width="7" height="7" fill="#000"/><path d="M930.5 475.5L937.5 482.5M937.5 475.5L930.5 482.5" stroke="#d99aa6" stroke-width="1.800"/><circle cx="830.5" cy="393.5" r="1.700" fill="#f4e4e4" stroke="#b05050" stroke-width=".9"/><rect x="952" y="470.5" width="3.5" height="3.5" fill="#e9a0a0" stroke="#9a4a4a" stroke-width=".8"/><rect x="1002.5" y="507.5" width="5" height="5" fill="none" stroke="#9a8a8a" stroke-width="1"/><path d="M1006.3 514.5L1008.8 512.0L1011.3 514.5L1008.8 517.0Z" fill="none" stroke="#b07a7a" stroke-width="1"/><path d="M1010.1 519.0L1012.6 516.4L1015.2 519.0L1012.6 521.6Z" fill="none" stroke="#b07a7a" stroke-width="1"/><path d="M1013.8 523.5L1016.5 520.8L1019.1 523.5L1016.5 526.2Z" fill="none" stroke="#b07a7a" stroke-width="1"/><path d="M1017.5 528.0L1020.3 525.2L1023.0 528.0L1020.3 530.8Z" fill="none" stroke="#b07a7a" stroke-width="1"/><path d="M1021.2 532.5L1024.1 529.6L1026.9 532.5L1024.1 535.4Z" fill="none" stroke="#b07a7a" stroke-width="1"/><path d="M1025.0 537.0L1027.9 534.1L1030.9 537.0L1027.9 539.9Z" fill="none" stroke="#b07a7a" stroke-width="1"/><path d="M1028.7 541.5L1031.7 538.5L1034.8 541.5L1031.7 544.5Z" fill="none" stroke="#222" stroke-width="1"/><path d="M1032.4 546.0L1035.5 542.9L1038.7 546.0L1035.5 549.1Z" fill="none" stroke="#222" stroke-width="1"/><path d="M1036.1 550.5L1039.4 547.3L1042.6 550.5L1039.4 553.7Z" fill="none" stroke="#222" stroke-width="1"/><path d="M1039.9 555.0L1043.2 551.7L1046.5 555.0L1043.2 558.3Z" fill="none" stroke="#222" stroke-width="1"/><path d="M1043.6 559.5L1047.0 556.1L1050.4 559.5L1047.0 562.9Z" fill="#fff" stroke="#222" stroke-width="1"/></svg>
<div style="left:0;top:118px;width:29px;height:690px;background:#f4f4f4"></div>
<div style="left:6px;top:121px;width:19px;height:2px;background:repeating-linear-gradient(90deg,#555 0 2px,transparent 2px 4px)"></div>
<div style="left:3px;top:129px;width:24px;height:24px;background:linear-gradient(#a4d8f3 0,#74c2ea 46%,#4caae0 52%,#7ccdf0 100%);border:1px solid #2e78b0;border-radius:3px;box-shadow:inset 0 0 0 1px rgba(255,255,255,.3)"></div>
<svg style="left:3px;top:129px" width="26" height="24" viewBox="0 0 26 24"><path d="M8.5 5.5V16.5L11.300 13.800L13.300 18.200L15 17.400L13 13H16.5Z" fill="#fff" stroke="#5a6a8a" stroke-width="1"/></svg>
<svg style="left:3px;top:155px" width="26" height="24" viewBox="0 0 26 24"><circle cx="6.5" cy="9" r="1.600" fill="#fff" stroke="#444" stroke-width=".9"/><path d="M7.5 3.5L6.800 7M6.800 11C6.5 14 7.5 16.5 10 18" stroke="#666" fill="none" stroke-width=".9"/><path d="M10 10.5L18.5 14.5L11 17.5Z" fill="#222"/><path d="M22.5 21.5V16.5L17.5 21.5Z" fill="#000"/></svg>
<svg style="left:3px;top:181.5px" width="26" height="24" viewBox="0 0 26 24"><path d="M9.5 4.5V15.5H19M5.5 8.5H15.5V19" stroke="#3a3a4a" stroke-width="1.800" fill="none"/><path d="M6.5 17.5L18.5 6" stroke="#3a3a4a" stroke-width="1.300"/><path d="M22.5 21.5V16.5L17.5 21.5Z" fill="#000"/></svg>
<svg style="left:3px;top:207px" width="26" height="24" viewBox="0 0 26 24"><circle cx="10.5" cy="10" r="5.800" fill="#fafafc" stroke="#6a6a7a" stroke-width="1.100"/><path d="M5.5 10.500a5 5 0 0 0 10 0z" fill="#c4c4d8"/><path d="M14.5 14L20 19.5" stroke="#2a2a3a" stroke-width="2.400"/><path d="M22.5 21.5V16.5L17.5 21.5Z" fill="#000"/></svg>
<svg style="left:3px;top:233px" width="26" height="24" viewBox="0 0 26 24"><path d="M7 3.5V9.5M4 6.5H10" stroke="#666" stroke-width=".9"/><path d="M7.5 14.5C8.5 11.5 10 11.5 11 14S13.5 17 15 14S17.5 13 19 16" stroke="#444" stroke-width="1.200" fill="none"/><path d="M22.5 21.5V16.5L17.5 21.5Z" fill="#000"/></svg>
<svg style="left:3px;top:259px" width="26" height="24" viewBox="0 0 26 24"><path d="M7 5L12 9.5L8.5 13L4 8.5Z" fill="#c98a4a" stroke="#5a4a3a" stroke-width=".9"/><path d="M6 3.5L8 6.5" stroke="#444"/><rect x="10.5" y="11.5" width="7" height="6" fill="#fff" stroke="#444"/><rect x="12.5" y="13.5" width="7" height="5" fill="#c9a06a" stroke="#444"/><path d="M22.5 21.5V16.5L17.5 21.5Z" fill="#000"/></svg>
<svg style="left:3px;top:286px" width="26" height="24" viewBox="0 0 26 24"><rect x="6.5" y="6.5" width="12" height="11" fill="#fff" stroke="#6a6a7a"/><rect x="7" y="12" width="11" height="5" fill="#d8d8e4"/><path d="M22.5 21.5V16.5L17.5 21.5Z" fill="#000"/></svg>
<svg style="left:3px;top:312px" width="26" height="24" viewBox="0 0 26 24"><circle cx="12" cy="12" r="6" fill="#fff" stroke="#6a6a7a"/><path d="M6.5 13a5.5 5.5 0 0 0 11 0z" fill="#d8d8e4"/><path d="M22.5 21.5V16.5L17.5 21.5Z" fill="#000"/></svg>
<svg style="left:3px;top:338.5px" width="26" height="24" viewBox="0 0 26 24"><path d="M8.5 6H16L19.5 12L16 18H8.5L5 12Z" fill="#fff" stroke="#6a6a7a"/><path d="M5.5 13H19L16 17.5H8.5Z" fill="#d8d8e4"/><path d="M22.5 21.5V16.5L17.5 21.5Z" fill="#000"/></svg>
<svg style="left:3px;top:363px" width="26" height="24" viewBox="0 0 26 24"><circle cx="11.5" cy="8.5" r="4" fill="#fff" stroke="#555"/><path d="M5.5 10.5L10.5 12V17.5L5.5 16Z" fill="#e4e4ec" stroke="#555"/><rect x="10.5" y="11.5" width="7.5" height="6.5" fill="#f4f4f8" stroke="#555"/><path d="M22.5 21.5V16.5L17.5 21.5Z" fill="#000"/></svg>
<svg style="left:3px;top:389px" width="26" height="24" viewBox="0 0 26 24"><path d="M5.5 19.5L10.5 5.5H13.5L19 19.5H15.800L14.800 16.5H9.400L8.5 19.5ZM10.300 13.5H13.800L12 8.5Z" fill="#f4f4f8" stroke="#6a6a7a"/></svg>
<svg style="left:3px;top:416.5px" width="26" height="24" viewBox="0 0 26 24"><rect x="5.5" y="6.5" width="13" height="12" fill="#fff" stroke="#5a4a6a"/><path d="M5.5 10.5H18.5M5.5 14.5H18.5M10 6.5V18.5M14 6.5V18.5" stroke="#8a6a8a"/></svg>
<div style="left:3px;top:441px;width:24px;height:23px;background:#f6f6f8;border:1px solid #8e8e98;border-radius:3px"></div>
<svg style="left:3px;top:441px" width="26" height="24" viewBox="0 0 26 24"><rect x="5.5" y="5.5" width="12" height="12" fill="#fff" stroke="#3a3a4a" stroke-width=".9"/><rect x="7.5" y="7.5" width="8" height="8" fill="none" stroke="#3a3a4a" stroke-width=".9"/><rect x="9.5" y="9.5" width="4" height="4" fill="#d4d4dc" stroke="#3a3a4a" stroke-width=".9"/><path d="M22.5 21.5V16.5L17.5 21.5Z" fill="#000"/></svg>
<svg style="left:3px;top:467px" width="26" height="24" viewBox="0 0 26 24"><path d="M5.5 19.5L6.5 16.5L12.5 10.5L14.5 12.5L8.5 18.5Z" fill="#e4e4ec" stroke="#3a3a4a" stroke-width=".9"/><path d="M11.5 8.5L16.5 13.5" stroke="#1a1a2a" stroke-width="1.800"/><path d="M13.5 10L16.5 6C18 4.5 20 6.5 18.5 8L15 11Z" fill="#2a2a3a" stroke="#1a1a2a"/><path d="M22.5 21.5V16.5L17.5 21.5Z" fill="#000"/></svg>
<svg style="left:3px;top:493px" width="26" height="24" viewBox="0 0 26 24"><path d="M12 3.5C10 6.5 8.5 10 8.5 12L10.5 14.5H13.5L15.5 12C15.5 10 14 6.5 12 3.5Z" fill="#fff" stroke="#3a3a4a" stroke-width=".9"/><path d="M12 5.5V11" stroke="#3a3a4a" stroke-width=".9"/><circle cx="12" cy="11.5" r="1" fill="#3a3a4a"/><path d="M8 16.750H16" stroke="#1a1a2a" stroke-width="1.5"/><path d="M22.5 21.5V16.5L17.5 21.5Z" fill="#000"/></svg>
<svg style="left:3px;top:519.5px" width="26" height="24" viewBox="0 0 26 24"><path d="M10 4L17.5 11L11 18L4 11.5Z" fill="#fff" stroke="#3a3a4a"/><path d="M4.800 11.5L11 17.5L16.5 11.5Z" fill="#d9a030"/><path d="M9 8C8 4.5 10 2.5 12 4.5" fill="none" stroke="#3a3a4a"/><path d="M17.5 11.5C19.5 14 19.5 16 18.200 16.5C17 16 17 14 17.5 11.5Z" fill="#d9a030"/><path d="M22.5 21.5V16.5L17.5 21.5Z" fill="#000"/></svg>
<svg style="left:3px;top:545px" width="26" height="24" viewBox="0 0 26 24"><path d="M8.5 5L13 9L9.5 12.5L6 8.5Z" fill="#9a6a4a" stroke="#5a4a3a" stroke-width=".9"/><path d="M7.5 3.5L9.5 6.5" stroke="#555"/><path d="M9 14L16 19L18 15.5L12 12Z" fill="#f0d8a0"/><path d="M22.5 21.5V16.5L17.5 21.5Z" fill="#000"/></svg>
<div style="left:28px;top:440px;width:156px;height:172px;background:#f8f8f8;border:1px solid #bcbcbc;box-shadow:1px 1px 2px rgba(0,0,0,.15)"></div>
<div style="left:36px;top:445px;width:142px;height:2px;background:repeating-linear-gradient(90deg,#444 0 2px,transparent 2px 3px)"></div>
<div style="left:30px;top:476px;width:152px;height:22px;background:#c1cee0;border:1px solid #39598a"></div>
<span class="t " style="left:64.4px;top:457.0px;font-size:12px;letter-spacing:-0.002px;">Metamorfoza</span>
<span class="t " style="left:64.4px;top:479.0px;font-size:12px;letter-spacing:-0.341px;">Obrys</span>
<span class="t " style="left:64.4px;top:501.0px;font-size:12px;letter-spacing:-0.207px;">Zniekształcenie</span>
<span class="t " style="left:64.4px;top:523.0px;font-size:12px;letter-spacing:-0.445px;">Cień</span>
<span class="t " style="left:64.4px;top:545.0px;font-size:12px;letter-spacing:-0.078px;">Obwiednia</span>
<span class="t " style="left:64.4px;top:567.0px;font-size:12px;letter-spacing:-0.448px;">Głębia</span>
<span class="t " style="left:64.4px;top:589.0px;font-size:12px;letter-spacing:-0.397px;">Przezroczystość</span>
<svg style="left:33px;top:457px" width="16" height="16" viewBox="0 0 16 16"><rect x="1.5" y="1.5" width="5" height="5" fill="#f4f6ff" stroke="#3a4a6a"/><rect x="4.5" y="4.5" width="6" height="6" fill="#f6cc58" stroke="#9a7a2a"/><rect x="8.5" y="8.5" width="7" height="7" fill="#ec741c" stroke="#b0541a"/></svg>
<svg style="left:33px;top:479px" width="16" height="16" viewBox="0 0 16 16"><rect x="1.5" y="2.5" width="12" height="11" fill="#fff" stroke="#3a3a4a" stroke-width=".8"/><rect x="3.5" y="4.5" width="8" height="7" fill="none" stroke="#3a3a4a" stroke-width=".8"/><rect x="5.5" y="6.5" width="4" height="3" fill="#fff" stroke="#3a3a4a" stroke-width=".8"/></svg>
<svg style="left:33px;top:501px" width="16" height="16" viewBox="0 0 16 16"><path d="M3 13.5L1.5 9.5L3 7L2.5 4L5.5 5.5L7.5 2.5L9.5 5.5L12.5 4L12 7L13.5 9.5L12.5 13.5L10 12.5L7.5 13.5L5 12.5Z" fill="#fff" stroke="#2e2e3a" stroke-width="1.100"/><path d="M4 10C6 9 9 9 11 10" stroke="#a4a4b4" fill="none"/></svg>
<svg style="left:33px;top:523px" width="16" height="16" viewBox="0 0 16 16"><rect x="3.5" y="6" width="9.5" height="9" fill="#9c9cb4" opacity=".85"/><rect x="1.5" y="3.5" width="9" height="9" fill="#fafafc" stroke="#4a4a5a" stroke-width=".9"/><rect x="2" y="8.5" width="8" height="3.5" fill="#e0e0ea"/></svg>
<svg style="left:33px;top:545px" width="16" height="16" viewBox="0 0 16 16"><path d="M2.5 2.5C5 5.5 10 5.5 12.5 2.5C10.5 6 10.5 10 12.5 13.5C10 10.5 5 10.5 2.5 13.5C4.5 10 4.5 6 2.5 2.5Z" fill="#fff" stroke="#3a3a4a" stroke-width=".9"/><circle cx="2.5" cy="2.5" r="1" fill="#3a3a4a"/><circle cx="12.5" cy="2.5" r="1" fill="#3a3a4a"/><circle cx="2.5" cy="13.5" r="1" fill="#3a3a4a"/><circle cx="12.5" cy="13.5" r="1" fill="#3a3a4a"/><circle cx="3.800" cy="8" r="1.100" fill="#fff" stroke="#3a3a4a" stroke-width=".8"/><circle cx="11.200" cy="8" r="1.100" fill="#fff" stroke="#3a3a4a" stroke-width=".8"/></svg>
<svg style="left:33px;top:567px" width="16" height="16" viewBox="0 0 16 16"><path d="M1.5 5L7 2.5L13.5 4.5L8 7.5Z" fill="#9a9ab2" stroke="#5a5a6e" stroke-width=".7"/><path d="M1.5 5L8 7.5V14.5L1.5 11.5Z" fill="#f2f2f6" stroke="#5a5a6e" stroke-width=".7"/><path d="M8 7.5L13.5 4.5V11L8 14.5Z" fill="#6e6e86" stroke="#5a5a6e" stroke-width=".7"/></svg>
<svg style="left:33px;top:589px" width="16" height="16" viewBox="0 0 16 16"><path d="M3.5 1.5H11.5C11.5 6 10.5 8 7.5 8.5C4.5 8 3.5 6 3.5 1.5Z" fill="#fff" stroke="#3a3a4a" stroke-width=".9"/><path d="M7.5 8.5V14.5M4.5 14.5H10.5" stroke="#3a3a4a" stroke-width="1.200"/></svg>
<div style="left:182px;top:476px;width:162px;height:20px;background:#ffffe1;border:1px solid #1a1a1a;box-shadow:2px 2px 2px rgba(0,0,0,.4)"></div>
<span class="t " style="left:184.7px;top:478.2px;font-size:12px;letter-spacing:-0.148px;">Interakcyjny obrys (narzędzie)</span>
<svg style="left:0px;top:0px" width="1439" height="855" viewBox="0 0 1439 855"><g fill="none" stroke="#fb0007" stroke-linecap="round" stroke-linejoin="round">
<path d="M63 105 L74 105.300 L85 107.800 L97 108.300" stroke-width="4.5" stroke-linecap="butt"/>
<path d="M427 119.5 L433.5 124.5 L452.5 125 L458.5 119.5" stroke-width="5.5" stroke-linecap="butt" stroke-linejoin="miter"/>
<rect x="499" y="108.5" width="5" height="4.5" fill="#fb0007" stroke="none"/>
<path d="M508 113.800 L520.5 119.200 L543 119.5" stroke-width="4.800" stroke-linecap="butt" stroke-linejoin="miter"/>
<path d="M331.5 460.5 L345 460.5 C348 458 352 457.5 356 457.5 L366 457.5 C372 458 376 461 376.5 468 L376 480 L374.5 500 L373 514 C372.5 519 370 520.5 366 521 L352 522 L333 523.5 C320 525 300 525.5 289 525 C275 523.5 264 521 254 519 L219.5 513 L184.700 508 L168 507" stroke-width="5.400" stroke-linecap="butt"/>
</g></svg>
<div style="left:1401px;top:139px;width:18px;height:653px;background:#f0f0f0"></div>
<div style="left:1401px;top:139px;width:1px;height:653px;background:#e0e0e0"></div>
<svg style="left:1406px;top:145px" width="7" height="4" viewBox="0 0 7 4"><path d="M0 4L3.5 0L7 4Z" fill="#8a8a8a"/></svg>
<svg style="left:1406px;top:781px" width="7" height="4" viewBox="0 0 7 4"><path d="M0 0H7L3.5 4Z" fill="#8a8a8a"/></svg>
<div style="left:1402px;top:278px;width:15px;height:363px;background:linear-gradient(90deg,#f6f6f6 0,#ececee 40%,#d6d7db 60%,#e4e5e8 100%);border:1px solid #9c9ea3;border-radius:2px"></div>
<div style="left:1406px;top:456px;width:6px;height:1px;background:#3e3e46"></div>
<div style="left:1406px;top:457px;width:6px;height:1px;background:rgba(255,255,255,.7)"></div>
<div style="left:1406px;top:459px;width:6px;height:1px;background:#3e3e46"></div>
<div style="left:1406px;top:460px;width:6px;height:1px;background:rgba(255,255,255,.7)"></div>
<div style="left:1406px;top:462px;width:6px;height:1px;background:#3e3e46"></div>
<div style="left:1406px;top:463px;width:6px;height:1px;background:rgba(255,255,255,.7)"></div>
<div style="left:1419px;top:118px;width:20px;height:690px;background:#f0f0f0"></div>
<div style="left:1425px;top:122px;width:11px;height:2px;background:repeating-linear-gradient(90deg,#444 0 2px,transparent 2px 4px)"></div>
<svg style="left:1422px;top:127px" width="17" height="17" viewBox="0 0 17 17"><circle cx="8" cy="8.5" r="6.5" fill="#f6f6f6" stroke="#b0b0b4"/><path d="M6 5.5L11 8.5L6 11.5Z" fill="#111"/></svg>
<svg style="left:1426px;top:150px" width="7" height="4" viewBox="0 0 7 4"><path d="M0 4L3.5 0L7 4Z" fill="#7a7a7a"/></svg>
<svg style="left:1421px;top:161px" width="18" height="17" viewBox="0 0 18 17"><rect x=".5" y=".5" width="17" height="16" fill="#fff" stroke="#555" stroke-width=".9"/><path d="M.5 .5L17.5 16.5M17.5 .5L.5 16.5" stroke="#222" stroke-width=".9"/></svg>
<div style="left:1421px;top:178px;width:18px;height:17px;background:#2f7a6e;border-bottom:1px solid rgba(0,0,0,.22);border-left:1px solid rgba(0,0,0,.18)"></div>
<div style="left:1421px;top:195px;width:18px;height:17px;background:#5a8482;border-bottom:1px solid rgba(0,0,0,.22);border-left:1px solid rgba(0,0,0,.18)"></div>
<div style="left:1421px;top:212px;width:18px;height:17px;background:#1f9389;border-bottom:1px solid rgba(0,0,0,.22);border-left:1px solid rgba(0,0,0,.18)"></div>
<div style="left:1421px;top:229px;width:18px;height:17px;background:#21956f;border-bottom:1px solid rgba(0,0,0,.22);border-left:1px solid rgba(0,0,0,.18)"></div>
<div style="left:1421px;top:246px;width:18px;height:17px;background:#12a7cf;border-bottom:1px solid rgba(0,0,0,.22);border-left:1px solid rgba(0,0,0,.18)"></div>
<div style="left:1421px;top:263px;width:18px;height:17px;background:#2292a8;border-bottom:1px solid rgba(0,0,0,.22);border-left:1px solid rgba(0,0,0,.18)"></div>
<div style="left:1421px;top:280px;width:18px;height:17px;background:#8fb0a5;border-bottom:1px solid rgba(0,0,0,.22);border-left:1px solid rgba(0,0,0,.18)"></div>
<div style="left:1421px;top:297px;width:18px;height:17px;background:#a6dcc4;border-bottom:1px solid rgba(0,0,0,.22);border-left:1px solid rgba(0,0,0,.18)"></div>
<div style="left:1421px;top:314px;width:18px;height:17px;background:#5cc7a8;border-bottom:1px solid rgba(0,0,0,.22);border-left:1px solid rgba(0,0,0,.18)"></div>
<div style="left:1421px;top:331px;width:18px;height:17px;background:#6e8b7c;border-bottom:1px solid rgba(0,0,0,.22);border-left:1px solid rgba(0,0,0,.18)"></div>
<div style="left:1421px;top:348px;width:18px;height:17px;background:#7a9a72;border-bottom:1px solid rgba(0,0,0,.22);border-left:1px solid rgba(0,0,0,.18)"></div>
<div style="left:1421px;top:365px;width:18px;height:17px;background:#93b36a;border-bottom:1px solid rgba(0,0,0,.22);border-left:1px solid rgba(0,0,0,.18)"></div>
<div style="left:1421px;top:382px;width:18px;height:17px;background:#9dbf86;border-bottom:1px solid rgba(0,0,0,.22);border-left:1px solid rgba(0,0,0,.18)"></div>
<div style="left:1421px;top:399px;width:18px;height:17px;background:#6cc23c;border-bottom:1px solid rgba(0,0,0,.22);border-left:1px solid rgba(0,0,0,.18)"></div>
<div style="left:1421px;top:416px;width:18px;height:17px;background:#a9dc76;border-bottom:1px solid rgba(0,0,0,.22);border-left:1px solid rgba(0,0,0,.18)"></div>
<div style="left:1421px;top:433px;width:18px;height:17px;background:#4d4a44;border-bottom:1px solid rgba(0,0,0,.22);border-left:1px solid rgba(0,0,0,.18)"></div>
<div style="left:1421px;top:450px;width:18px;height:17px;background:#77786a;border-bottom:1px solid rgba(0,0,0,.22);border-left:1px solid rgba(0,0,0,.18)"></div>
<div style="left:1421px;top:467px;width:18px;height:17px;background:#a3a38a;border-bottom:1px solid rgba(0,0,0,.22);border-left:1px solid rgba(0,0,0,.18)"></div>
<div style="left:1421px;top:484px;width:18px;height:17px;background:#a9a25c;border-bottom:1px solid rgba(0,0,0,.22);border-left:1px solid rgba(0,0,0,.18)"></div>
<div style="left:1421px;top:501px;width:18px;height:17px;background:#d8c95a;border-bottom:1px solid rgba(0,0,0,.22);border-left:1px solid rgba(0,0,0,.18)"></div>
<div style="left:1421px;top:518px;width:18px;height:17px;background:#fdf56a;border-bottom:1px solid rgba(0,0,0,.22);border-left:1px solid rgba(0,0,0,.18)"></div>
<div style="left:1421px;top:535px;width:18px;height:17px;background:#fdf68e;border-bottom:1px solid rgba(0,0,0,.22);border-left:1px solid rgba(0,0,0,.18)"></div>
<div style="left:1421px;top:552px;width:18px;height:17px;background:#fdf9b8;border-bottom:1px solid rgba(0,0,0,.22);border-left:1px solid rgba(0,0,0,.18)"></div>
<div style="left:1421px;top:569px;width:18px;height:17px;background:#9c8468;border-bottom:1px solid rgba(0,0,0,.22);border-left:1px solid rgba(0,0,0,.18)"></div>
<div style="left:1421px;top:586px;width:18px;height:17px;background:#c98a5c;border-bottom:1px solid rgba(0,0,0,.22);border-left:1px solid rgba(0,0,0,.18)"></div>
<div style="left:1421px;top:603px;width:18px;height:17px;background:#c4a066;border-bottom:1px solid rgba(0,0,0,.22);border-left:1px solid rgba(0,0,0,.18)"></div>
<div style="left:1421px;top:620px;width:18px;height:17px;background:#f08a4a;border-bottom:1px solid rgba(0,0,0,.22);border-left:1px solid rgba(0,0,0,.18)"></div>
<div style="left:1421px;top:637px;width:18px;height:17px;background:#f8a040;border-bottom:1px solid rgba(0,0,0,.22);border-left:1px solid rgba(0,0,0,.18)"></div>
<div style="left:1421px;top:654px;width:18px;height:17px;background:#f8a462;border-bottom:1px solid rgba(0,0,0,.22);border-left:1px solid rgba(0,0,0,.18)"></div>
<div style="left:1421px;top:671px;width:18px;height:17px;background:#fcc414;border-bottom:1px solid rgba(0,0,0,.22);border-left:1px solid rgba(0,0,0,.18)"></div>
<div style="left:1421px;top:688px;width:18px;height:17px;background:#fcd490;border-bottom:1px solid rgba(0,0,0,.22);border-left:1px solid rgba(0,0,0,.18)"></div>
<div style="left:1421px;top:705px;width:18px;height:17px;background:#7c6c54;border-bottom:1px solid rgba(0,0,0,.22);border-left:1px solid rgba(0,0,0,.18)"></div>
<div style="left:1421px;top:722px;width:18px;height:17px;background:#a0543c;border-bottom:1px solid rgba(0,0,0,.22);border-left:1px solid rgba(0,0,0,.18)"></div>
<div style="left:1421px;top:739px;width:18px;height:17px;background:#c46a34;border-bottom:1px solid rgba(0,0,0,.22);border-left:1px solid rgba(0,0,0,.18)"></div>
<div style="left:1421px;top:756px;width:18px;height:17px;background:#f47c54;border-bottom:1px solid rgba(0,0,0,.22);border-left:1px solid rgba(0,0,0,.18)"></div>
<div style="left:1422px;top:621px;width:16px;height:17px;border:1px solid #000;box-shadow:inset 0 0 0 1px #f9d0b0"></div>
<svg style="left:1426px;top:781px" width="7" height="4" viewBox="0 0 7 4"><path d="M0 0H7L3.5 4Z" fill="#7a7a7a"/></svg>
<div style="left:51px;top:792px;width:1388px;height:16px;background:#f0f0f0"></div>
<div style="left:735px;top:792px;width:666px;height:16px;background:#ebebeb"></div>
<div style="left:51px;top:791px;width:684px;height:1px;background:#9a9a9a"></div>
<div style="left:217px;top:792px;width:514px;height:16px;background:#f3f3f3"></div>
<svg style="left:54px;top:794px" width="10" height="12" viewBox="0 0 10 12"><path d="M.5 .5H5.5L8.5 3.5V11.5H.5Z" fill="#fff" stroke="#111"/><path d="M5.5 .5V3.5H8.5" fill="none" stroke="#111"/><path d="M4.5 4.5V9.5M2 7H7" stroke="#111"/></svg>
<svg style="left:203px;top:794px" width="10" height="12" viewBox="0 0 10 12"><path d="M.5 .5H5.5L8.5 3.5V11.5H.5Z" fill="#fff" stroke="#111"/><path d="M5.5 .5V3.5H8.5" fill="none" stroke="#111"/><path d="M4.5 4.5V9.5M2 7H7" stroke="#111"/></svg>
<svg style="left:72px;top:795px" width="8" height="10" viewBox="0 0 8 10"><path d="M1 0V10" stroke="#7a7a7a" stroke-width="1.5"/><path d="M8 0V10L2.5 5Z" fill="#7a7a7a"/></svg>
<svg style="left:92px;top:795px" width="6" height="10" viewBox="0 0 6 10"><path d="M6 0V10L0 5Z" fill="#7a7a7a"/></svg>
<svg style="left:172px;top:795px" width="6" height="10" viewBox="0 0 6 10"><path d="M0 0V10L6 5Z" fill="#7a7a7a"/></svg>
<svg style="left:186px;top:795px" width="8" height="10" viewBox="0 0 8 10"><path d="M7 0V10" stroke="#7a7a7a" stroke-width="1.5"/><path d="M0 0V10L5.5 5Z" fill="#7a7a7a"/></svg>
<span class="t " style="left:120.5px;top:792.4px;font-size:12.5px;letter-spacing:-0.020px;">1 z 1</span>
<svg style="left:216px;top:791px" width="84" height="17" viewBox="0 0 84 17"><path d="M.5 17V.5H74L81.5 9.5V17" fill="#fff" stroke="#8a8a8a"/></svg>
<span class="t " style="left:232.5px;top:792.4px;font-size:12.5px;letter-spacing:0.094px;">Strona 1</span>
<div style="left:730px;top:792px;width:6px;height:16px;background:#fff;border-left:1px solid #c4c4c4;border-right:1px solid #7e7e7e"></div>
<svg style="left:743px;top:796px" width="4" height="7" viewBox="0 0 4 7"><path d="M4 0V7L0 3.5Z" fill="#7a7a7a"/></svg>
<svg style="left:1391px;top:796px" width="4" height="7" viewBox="0 0 4 7"><path d="M0 0V7L4 3.5Z" fill="#7a7a7a"/></svg>
<div style="left:755px;top:792px;width:518px;height:15px;background:linear-gradient(#f4f4f4 0,#e4e4e4 40%,#cacaca 60%,#d8d8d8 100%);border:1px solid #8c8c8c;border-radius:2px"></div>
<div style="left:1010px;top:796px;width:1px;height:6px;background:#3a3a42"></div>
<div style="left:1013px;top:796px;width:1px;height:6px;background:#3a3a42"></div>
<div style="left:1016px;top:796px;width:1px;height:6px;background:#3a3a42"></div>
<svg style="left:1402px;top:792px" width="15" height="15" viewBox="0 0 15 15"><circle cx="6" cy="6" r="4.5" fill="#f4f4f4" stroke="#5a5a6a" stroke-width="1.200"/><path d="M6 3.5V8.5M3.5 6H8.5" stroke="#5a5a6a"/><path d="M9.5 9.5L13.5 13.5" stroke="#3a3a4a" stroke-width="2"/></svg>
<svg style="left:1426px;top:795px" width="8" height="9" viewBox="0 0 8 9"><path d="M.75 0V9" stroke="#000" stroke-width="1.5"/><path d="M7.5 0V9L2.5 4.5Z" fill="#000"/></svg>
<div style="left:0;top:808px;width:1439px;height:44px;background:#f2f2f2"></div>
<div style="left:0;top:808px;width:1439px;height:3px;background:#f9f9f9"></div>
<span class="t " style="left:404.0px;top:813.9px;font-size:11px;letter-spacing:-0.021px;">Grupa obrysu na Warstwa 1</span>
<span class="t " style="left:5.0px;top:833.9px;font-size:11px;letter-spacing:0.061px;">( -277,374; 102,385 )</span>
<span class="t " style="left:119.0px;top:833.9px;font-size:11px;letter-spacing:-0.081px;">Kliknij dwukrotnie obiekt, aby go obracać/pochylać; kliknięcie dwukrotne narzędzia powoduje zaznaczenie wszystkich obiektów; kliknięcie z przytrzy...</span>
<span class="t " style="left:1277.0px;top:813.9px;font-size:11px;letter-spacing:-0.130px;">Kolor wypełnienia</span>
<span class="t " style="left:1277.0px;top:833.9px;font-size:11px;letter-spacing:-0.109px;">Kolor konturu</span>
<svg style="left:1236px;top:814px" width="16" height="16" viewBox="0 0 16 16"><path d="M7 2L13.5 8L7.5 14.5L1.5 9Z" fill="#fff" stroke="#4a4a5a"/><path d="M2.200 9L7.5 14L12.5 9Z" fill="#e0801c"/><path d="M6 6C5 2.5 7 .5 8.5 2" fill="none" stroke="#4a4a5a"/><path d="M13.5 8.5C15.5 11 15.5 13 14.200 13.5C13 13 13 11 13.5 8.5Z" fill="#d9782a"/></svg>
<svg style="left:1239px;top:835px" width="11" height="15" viewBox="0 0 11 15"><path d="M5.5 .5C3.5 3.5 2 6.5 2 8.5L4 11.5H7L9 8.5C9 6.5 7.5 3.5 5.5 .5Z" fill="#fff" stroke="#3a3a4a"/><path d="M5.5 2.5V8" stroke="#3a3a4a"/><circle cx="5.5" cy="8.5" r="1" fill="#3a3a4a"/><path d="M1 13.5H10" stroke="#1a1a2a" stroke-width="1.800"/></svg>
<svg style="left:1256px;top:813px" width="18" height="18" viewBox="0 0 18 18"><rect x=".5" y=".5" width="17" height="17" fill="#fff" stroke="#8e8e8e"/><path d="M1 1L17 17" stroke="#a8182c" stroke-width="2"/></svg>
<svg style="left:1256px;top:833px" width="18" height="18" viewBox="0 0 18 18"><rect x=".5" y=".5" width="17" height="17" fill="#fff" stroke="#8e8e8e"/><path d="M1 1L17 17" stroke="#a8182c" stroke-width="2"/></svg>
<svg style="left:1435px;top:841px" width="4" height="4" viewBox="0 0 4 4"><path d="M0 0H2V2H0ZM3 1H4V3H3Z" fill="#555"/></svg>
<div style="left:0;top:851px;width:1439px;height:2px;background:linear-gradient(#f2f6f9,#dfecf6)"></div>
<div style="left:0;top:853px;width:1439px;height:2px;background:linear-gradient(#4f6581,#7089a8)"></div>
</body></html>
